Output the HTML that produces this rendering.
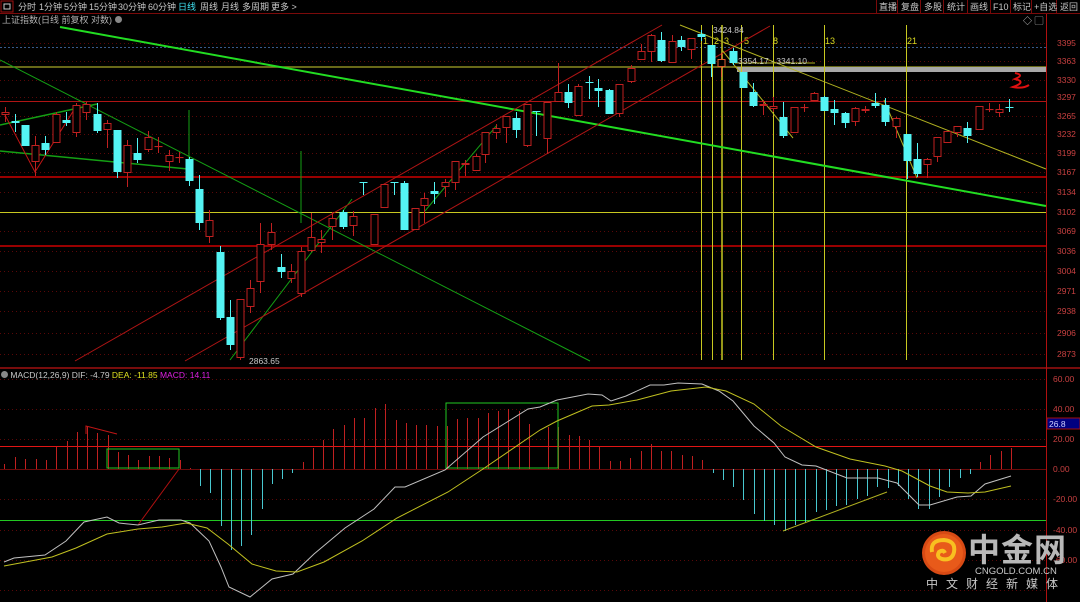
<!DOCTYPE html>
<html><head><meta charset="utf-8"><style>
html,body{margin:0;padding:0;background:#000;width:1080px;height:602px;overflow:hidden;font-family:"Liberation Sans","Noto Sans CJK SC",sans-serif}
.t{position:absolute;font-size:9px;color:#c8c8c8;white-space:nowrap;line-height:12px}
</style></head><body>
<svg id="s" width="1080" height="602" style="position:absolute;left:0;top:0" xmlns="http://www.w3.org/2000/svg">
<rect width="1080" height="602" fill="#000"/>
<line x1="0" y1="13.5" x2="1080" y2="13.5" stroke="#7a0a0a"/>
<rect x="1" y="1" width="12" height="11" fill="none" stroke="#a01010"/>
<rect x="4" y="4" width="6" height="5" fill="none" stroke="#ccc"/>
<g stroke="#7a0a0a"><line x1="876.5" y1="0" x2="876.5" y2="13"/><line x1="897.5" y1="0" x2="897.5" y2="13"/><line x1="920.5" y1="0" x2="920.5" y2="13"/><line x1="943.5" y1="0" x2="943.5" y2="13"/><line x1="967.5" y1="0" x2="967.5" y2="13"/><line x1="990.5" y1="0" x2="990.5" y2="13"/><line x1="1010.5" y1="0" x2="1010.5" y2="13"/><line x1="1031.5" y1="0" x2="1031.5" y2="13"/><line x1="1056.5" y1="0" x2="1056.5" y2="13"/></g>
<g id="grid"></g>
<!-- horizontal lines main -->
<line x1="0" y1="47.5" x2="1046" y2="47.5" stroke="#3a5a8a" stroke-dasharray="2,2"/>
<line x1="0" y1="67" x2="1046" y2="67" stroke="#8a8a20" stroke-width="1.5"/>
<rect x="737" y="67" width="309" height="5" fill="#a8a8a8"/>
<line x1="0" y1="101.5" x2="1046" y2="101.5" stroke="#b01515"/>
<line x1="0" y1="177" x2="1046" y2="177" stroke="#900" stroke-width="2"/>
<line x1="0" y1="212.5" x2="1046" y2="212.5" stroke="#c8c820"/>
<line x1="0" y1="246" x2="1046" y2="246" stroke="#900" stroke-width="2"/>
<!-- verticals yellow -->
<g stroke="#c8c820" stroke-width="1"><line x1="701.5" y1="25" x2="701.5" y2="360"/><line x1="712.5" y1="25" x2="712.5" y2="360"/><line x1="722" y1="25" x2="722" y2="360" stroke-width="1.5"/><line x1="741.5" y1="25" x2="741.5" y2="360"/><line x1="773.5" y1="25" x2="773.5" y2="360"/><line x1="824.5" y1="25" x2="824.5" y2="360"/><line x1="906.5" y1="25" x2="906.5" y2="360"/></g>
<g fill="#d8d820" font-size="9" font-family="Liberation Sans"><text x="703" y="44">1</text><text x="714" y="44">2</text><text x="724" y="44">3</text><text x="744" y="44">5</text><text x="773" y="44">8</text><text x="825" y="44">13</text><text x="907" y="44">21</text></g>
<!-- channel / trend lines -->
<line x1="60" y1="27" x2="1046" y2="206" stroke="#22dd22" stroke-width="2"/>
<line x1="0" y1="60" x2="590" y2="361" stroke="#14a014"/>
<line x1="0" y1="151" x2="188" y2="169" stroke="#14a014" stroke-width="1.5"/>
<line x1="0" y1="125" x2="97" y2="104" stroke="#14a014" stroke-width="1.5"/>
<line x1="189" y1="110" x2="189" y2="160" stroke="#14a014"/>
<line x1="301" y1="151" x2="301" y2="223" stroke="#14a014"/>
<line x1="230" y1="360" x2="352" y2="199" stroke="#14a014"/>
<line x1="425" y1="211" x2="497" y2="125" stroke="#14a014"/>
<line x1="75" y1="361" x2="662" y2="25" stroke="#b01515"/>
<line x1="185" y1="361" x2="770" y2="26" stroke="#b01515"/>
<polyline points="5,115 35,172 77,105" fill="none" stroke="#c01515"/>
<line x1="680" y1="25" x2="1046" y2="169" stroke="#b0b020"/>
<line x1="722" y1="50" x2="793" y2="138" stroke="#b0b020"/>
<line x1="884" y1="100" x2="917" y2="178" stroke="#b0b020"/>
<line x1="735" y1="63" x2="815" y2="63" stroke="#b0b020"/>
<path d="M1015 73 q10 2 0 6 q12 3 -2 8 q10 2 16 -2" fill="none" stroke="#e01010" stroke-width="2"/>
<g id="cand"></g>
<g fill="#c8c8c8" font-size="8.5" font-family="Liberation Sans"><text x="713" y="33">3424.84</text><text x="738" y="64">3354.17 - 3341.10</text><text x="249" y="364">2863.65</text></g>
<!-- separator -->
<line x1="0" y1="368" x2="1080" y2="368" stroke="#a01010" stroke-width="1.5"/>
<line x1="1046.5" y1="14" x2="1046.5" y2="602" stroke="#b01010"/>
<!-- macd lines -->
<line x1="0" y1="469.5" x2="1046" y2="469.5" stroke="#6a0a0a"/>
<line x1="0" y1="446.5" x2="1046" y2="446.5" stroke="#e01515"/>
<line x1="0" y1="520.5" x2="1046" y2="520.5" stroke="#22c822"/>
<g id="bars"></g>
<rect x="107" y="449" width="72" height="19" fill="none" stroke="#22c822"/>
<rect x="446" y="403" width="112" height="65" fill="none" stroke="#22c822"/>
<polyline points="86,434 86,426 117,434" fill="none" stroke="#c01515"/>
<line x1="138" y1="525" x2="179" y2="469" stroke="#b01010"/>
<line x1="783" y1="531" x2="887" y2="492" stroke="#b0b020"/>
<polyline fill="none" stroke="#c0c0c0" points="4,562 14,558 45,555 66,541 84,522 107,517 119,523 138,525 159,520 181,520 190,523 209,541 221,567 229,587 250,597 272,579 293,574 314,554 345,528 374,509 395,487 405,487 445,470 483,437 528,409 540,407 557,400 588,394 602,395 611,401 626,396 650,385 664,385 678,383 702,384 719,391 733,401 754,426 774,443 785,457 802,465 816,466 847,478 878,478 897,483 919,505 930,505 957,497 971,496 985,484 1011,476"/>
<polyline fill="none" stroke="#c0c020" points="4,566 52,557 76,548 107,534 138,529 162,527 186,523 207,528 228,544 252,564 276,571 297,572 324,562 362,541 397,518 448,492 483,469 540,430 557,421 592,406 609,405 637,400 671,391 706,387 726,391 754,404 781,426 816,447 850,459 885,466 902,471 930,486 947,492 968,493 985,492 1011,486"/>
<rect x="1047" y="418" width="33" height="11" fill="#000080" stroke="#a01010"/>
<text x="1049" y="427" fill="#d0d0ff" font-size="8.5" font-family="Liberation Sans">26.8</text>
<g fill="#c84040" font-size="8.5" font-family="Liberation Sans" id="ax"></g>
<!-- logo -->
<circle cx="944" cy="553" r="22" fill="#d84a14"/>
<circle cx="944" cy="553" r="19" fill="#e85a1a"/>
<path d="M932 552 q-2 -12 12 -12 q12 1 10 12 q-2 9 -12 7 q-6 -2 -3 -7 q4 -3 6 1" fill="none" stroke="#f8c020" stroke-width="4"/>
</svg>
<div class="t" style="left:18px;top:1px">分时</div><div class="t" style="left:39px;top:1px">1分钟</div><div class="t" style="left:64px;top:1px">5分钟</div><div class="t" style="left:89px;top:1px">15分钟</div><div class="t" style="left:118px;top:1px">30分钟</div><div class="t" style="left:148px;top:1px">60分钟</div><div class="t" style="left:178px;top:1px;color:#40e0f0">日线</div><div class="t" style="left:200px;top:1px">周线</div><div class="t" style="left:221px;top:1px">月线</div><div class="t" style="left:242px;top:1px">多周期</div><div class="t" style="left:271px;top:1px">更多 &gt;</div>
<div class="t" style="left:879px;top:1px">直播</div><div class="t" style="left:901px;top:1px">复盘</div><div class="t" style="left:924px;top:1px">多股</div><div class="t" style="left:947px;top:1px">统计</div><div class="t" style="left:970px;top:1px">画线</div><div class="t" style="left:993px;top:1px">F10</div><div class="t" style="left:1013px;top:1px">标记</div><div class="t" style="left:1034px;top:1px">+自选</div><div class="t" style="left:1060px;top:1px">返回</div>
<div class="t" style="left:2px;top:14px;color:#b0b0b0">上证指数(日线 前复权 对数) <span style="display:inline-block;width:7px;height:7px;border-radius:50%;background:#888"></span></div>
<div class="t" style="left:1023px;top:15px;color:#ccc">◇ ▢</div>
<div class="t" style="left:1px;top:369px;color:#c8c8c8;font-size:8.5px"><span style="display:inline-block;width:7px;height:7px;border-radius:50%;background:#888"></span> MACD(12,26,9) DIF: -4.79 <span style="color:#e0e020">DEA: -11.85</span> <span style="color:#e020e0">MACD: 14.11</span></div>
<div style="position:absolute;left:968px;top:528px;font-size:32px;font-weight:bold;color:#b8b8b8;letter-spacing:1px;font-family:'Noto Sans CJK SC',sans-serif;line-height:40px">中金网</div>
<div style="position:absolute;left:975px;top:566px;font-size:9.5px;color:#c8c8c8;line-height:12px">CNGOLD.COM.CN</div>
<div style="position:absolute;left:926px;top:577px;font-size:12px;color:#c8c8c8;letter-spacing:8px;line-height:14px;font-family:'Noto Sans CJK SC',sans-serif">中文财经新媒体</div>
<script>
var NS="http://www.w3.org/2000/svg";
function el(p,n,a){var e=document.createElementNS(NS,n);for(var k in a)e.setAttribute(k,a[k]);p.appendChild(e);return e;}
var g=document.getElementById('grid');
[43,61,80,97,116,134,153,172,192,212,231,251,271,291,311,333,354,379,409,439,499,530,560,590].forEach(function(y){el(g,'line',{x1:0,y1:y+.5,x2:1046,y2:y+.5,stroke:'#5a0808','stroke-dasharray':'1,3'});});
var ax=document.getElementById('ax');
[[3395,43],[3363,61],[3330,80],[3297,97],[3265,116],[3232,134],[3199,153],[3167,172],[3134,192],[3102,212],[3069,231],[3036,251],[3004,271],[2971,291],[2938,311],[2906,333],[2873,354]].forEach(function(a){var t=el(ax,'text',{x:1057,y:a[1]+3});t.textContent=a[0];});
[['60.00',379],['40.00',409],['20.00',439],['0.00',469],['-20.00',499],['-40.00',530],['-60.00',560]].forEach(function(a){var t=el(ax,'text',{x:1053,y:a[1]+3});t.textContent=a[0];});
var C=[[5,112,115,107,122,'r'],[15,121,123,114,132,'c'],[25,125,146,125,146,'c'],[35,145,162,136,176,'r'],[45,143,150,136,155,'c'],[56,114,143,112,143,'r'],[66,120,123,112,126,'c'],[76,105,133,103,137,'r'],[86,104,113,102,120,'r'],[97,114,131,103,133,'c'],[107,123,130,120,148,'r'],[117,130,172,130,178,'c'],[127,145,173,140,187,'r'],[137,153,160,138,163,'c'],[148,137,150,131,152,'r'],[158,146,147,137,153,'r'],[169,155,162,150,171,'r'],[179,157,158,152,163,'r'],[189,159,181,157,186,'c'],[199,189,223,175,230,'c'],[209,220,237,210,243,'r'],[220,252,318,246,320,'c'],[230,317,345,300,350,'c'],[240,299,358,299,360,'r'],[250,288,307,280,313,'r'],[260,244,282,223,293,'r'],[271,232,245,223,250,'r'],[281,267,272,254,278,'c'],[291,271,279,264,283,'r'],[301,251,294,247,297,'r'],[311,237,251,213,252,'r'],[321,239,243,230,253,'r'],[332,218,227,212,240,'r'],[343,212,227,210,229,'c'],[353,216,226,211,236,'r'],[363,182,183,182,195,'c'],[374,214,245,214,245,'r'],[384,184,208,184,208,'r'],[394,182,183,182,195,'c'],[404,183,230,181,230,'c'],[415,208,230,208,230,'r'],[424,198,206,193,223,'r'],[434,191,194,182,204,'c'],[445,182,187,179,197,'r'],[455,161,183,161,190,'r'],[465,163,165,160,176,'r'],[476,156,171,154,171,'r'],[485,132,155,132,163,'r'],[496,128,133,124,139,'r'],[506,116,128,116,143,'r'],[516,118,130,112,138,'c'],[527,104,146,104,147,'r'],[536,111,112,111,136,'c'],[547,102,139,102,154,'r'],[558,92,102,63,102,'r'],[568,92,103,84,108,'c'],[578,86,116,84,116,'r'],[589,82,83,76,99,'c'],[598,88,91,79,107,'c'],[609,90,114,89,114,'c'],[619,84,114,84,117,'r'],[631,68,82,65,83,'r'],[641,51,60,44,60,'r'],[651,35,52,34,62,'r'],[661,40,61,32,62,'c'],[672,41,63,35,63,'r'],[681,40,47,36,51,'c'],[691,38,50,38,59,'r'],[701,34,37,30,41,'c'],[711,45,64,45,77,'c'],[721,59,67,53,77,'o'],[733,51,63,48,65,'c'],[743,72,88,72,88,'c'],[753,92,106,83,107,'c'],[763,104,106,100,115,'r'],[773,106,109,97,112,'r'],[783,117,136,102,138,'c'],[794,107,133,107,133,'r'],[804,107,108,104,112,'r'],[814,93,101,92,101,'r'],[824,97,111,96,111,'c'],[834,109,113,100,125,'c'],[845,113,123,112,128,'c'],[855,108,122,107,126,'r'],[865,109,111,106,113,'r'],[875,103,106,93,108,'c'],[885,105,122,98,126,'c'],[896,118,127,117,138,'r'],[907,134,161,134,179,'c'],[917,159,174,143,177,'c'],[927,159,165,158,178,'r'],[937,137,157,137,162,'r'],[947,131,143,131,143,'r'],[957,126,133,126,137,'r'],[967,128,136,122,143,'c'],[979,106,130,106,130,'r'],[989,109,110,103,112,'r'],[999,109,113,104,117,'r'],[1009,107,108,99,112,'c']];
var cg=document.getElementById('cand');
C.forEach(function(c){var x=c[0],col=c[5]=='c'?'#54f4f4':(c[5]=='o'?'#e06030':'#c02020');
el(cg,'line',{x1:x+.5,y1:c[3],x2:x+.5,y2:c[4],stroke:col});
var h=Math.max(1,c[2]-c[1]);
if(c[5]=='c')el(cg,'rect',{x:x-3.5,y:c[1],width:8,height:h,fill:col});
else el(cg,'rect',{x:x-3,y:c[1]+.5,width:7,height:Math.max(0.1,h-1),fill:'#000',stroke:col});});
var B1=[464,457,459,459,460,447,441,432,426,433,435,452,455,460,456,456,458,460,468,486,493,526,550,546,535,509,484,479,473,462,448,440,429,425,418,418,408,404,420,423,425,425,426,426,419,418,418,413,411,409,411,424];
var x1s=[4,15,25,36,46,56,67,77,87,97,108,118,128,138,149,159,169,180,190,200,210,221,231,241,251,262,272,282,292,303,313,323,333,344,354,364,375,385,396,406,416,426,437,447,457,467,478,488,498,508,519,529];
var B2=[427,427,435,436,440,447,461,461,458,451,444,451,451,455,456,460,473,480,487,500,514,521,525,531,525,522,512,510,506,505,499,496,487,488,486,499,509,509,497,487,478,474,462,455,451,448];
var bg=document.getElementById('bars');
function bar(x,y){var neg=y>469;el(bg,'line',{x1:x+.5,y1:469,x2:x+.5,y2:y,stroke:neg?'#48c8d0':'#c02020'});}
B1.forEach(function(y,i){bar(x1s[i],y);});
B2.forEach(function(y,i){bar(Math.round(548+i*(1011-548)/(B2.length-1)),y);});
</script>
</body></html>
